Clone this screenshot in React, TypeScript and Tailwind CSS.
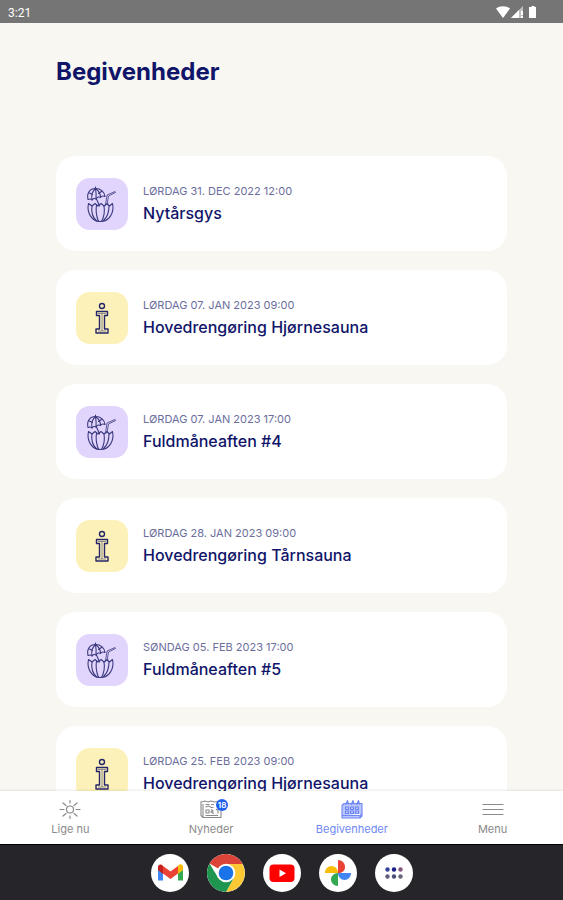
import type { ReactNode } from "react";

type Kind = "party" | "info";

const events: { kind: Kind; date: string; title: string }[] = [
  { kind: "party", date: "LØRDAG 31. DEC 2022 12:00", title: "Nytårsgys" },
  { kind: "info", date: "LØRDAG 07. JAN 2023 09:00", title: "Hovedrengøring Hjørnesauna" },
  { kind: "party", date: "LØRDAG 07. JAN 2023 17:00", title: "Fuldmåneaften #4" },
  { kind: "info", date: "LØRDAG 28. JAN 2023 09:00", title: "Hovedrengøring Tårnsauna" },
  { kind: "party", date: "SØNDAG 05. FEB 2023 17:00", title: "Fuldmåneaften #5" },
  { kind: "info", date: "LØRDAG 25. FEB 2023 09:00", title: "Hovedrengøring Hjørnesauna" },
];

function CoconutIcon() {
  return (
    <svg viewBox="0 0 52 52" className="size-13" fill="none" stroke="#3b397d" strokeWidth="1.1" strokeLinecap="round" strokeLinejoin="round" aria-hidden="true">
      <path d="M12 21.500C10.500 15 14 10.500 19.500 10.500c5.500 0 9 3.500 9.500 8-2-1-3.500-.5-4.500 1-2-1-3.500-.5-4.500 1.500-1.500-1-3-.5-4 1-1-1.200-2.500-1.300-4-.5z" />
      <path d="M19.500 10.500c-3 2.500-4.500 6.500-3.500 11.500M19.500 10.500c.5 3 1 6 .5 10.500M19.500 10.500c3 2 5 5 5 9M19.500 10.500V9M13.500 15l3 1.500M25.500 13.500l-3 2M20.500 21l3 7" />
      <path d="M29.500 27l1.500-10 8-3.500M31 27l1.500-9 7-3.500" strokeWidth="0.8" />
      <path d="M12.500 25.500l3.500 2.500 3-2.500 3 2.500 3-2.500 3 2.500 3-2.500 2.500 2.500 3-2.500c2 9-3 18-12 18s-14-9-12-18z" />
      <path d="M16 28c-1 6 1 11.500 4.500 15M20.500 27c-1 6 0 11.500 2 16.500M28 28c1 6 0 11-2.500 15.500M33 28c0 6-2 11.500-5.500 14.500" />
    </svg>
  );
}

function InfoIcon() {
  return (
    <svg viewBox="0 0 52 52" className="size-13" fill="none" stroke="#25266b" strokeWidth="1.4" strokeLinejoin="round" aria-hidden="true">
      <circle cx="26" cy="14" r="2.500" />
      <path d="M20.500 19.500h11v4h-3v13.500h3.500v4H20v-4h3.500V23.500h-3z" />
      <path d="M26 21.500v17.500M22 21.500h8M22 39h8" strokeWidth="0.5" />
    </svg>
  );
}

function SunIcon() {
  return (
    <svg viewBox="0 0 22 20" className="h-5 w-5.5" fill="none" stroke="currentColor" strokeWidth="1.2" strokeLinecap="round" aria-hidden="true">
      <circle cx="11" cy="10.500" r="3.500" />
      <path d="M11 1.500V4M11 17v2.500M1 10.500h4M17 10.500h4M4 4l3 2.500M18 4l-3 2.500M4 17l3-2.500M18 17l-3-2.500" />
    </svg>
  );
}

function NewsIcon() {
  return (
    <svg viewBox="0 0 22 20" className="h-5 w-5.5" fill="none" stroke="currentColor" strokeWidth="1.1" aria-hidden="true">
      <path d="M1 3l4-1 3 1 3-1 4 1 6-1v16.500H3L1 16.500zM3 18.500V5" />
      <path d="M5.500 5.500h4M11 5.500h3M5.500 8l3-1 3 1.500h2M6 11h3v3H6zM11 10.500l2 1.500-2 1 3 1.500M16 10l2 1.500v3M5.500 16.500H18" />
    </svg>
  );
}

function CalendarIcon() {
  return (
    <svg viewBox="0 0 22 20" className="h-5 w-5.5" fill="none" stroke="currentColor" strokeWidth="1.1" strokeLinejoin="round" aria-hidden="true">
      <path d="M3 4.500h18v12.500l-2 2H1V6.500zM1 16.500h18l2-2M19 16.500V19" fill="#b9c5fb" />
      <path d="M4.500 6l2-4.500 1 4M10 6l2-4.500 1 4M15.500 6l2-4.500 1 4" />
      <path d="M4.500 8h3v2.500h-3zM9.500 8h3v2.500h-3zM14.500 8h3v2.500h-3zM4.500 12h3v2.500h-3zM9.500 12h3v2.500h-3zM14.500 12h3v2.500h-3z" />
    </svg>
  );
}

function MenuIcon() {
  return (
    <svg viewBox="0 0 22 20" className="h-5 w-5.5" stroke="currentColor" strokeWidth="1.2" aria-hidden="true">
      <path d="M.5 5.500h21M.5 10.500h21M.5 15.500h21" />
    </svg>
  );
}

function Tab({ label, active, badge, children }: { label: string; active?: boolean; badge?: string; children: ReactNode }) {
  return (
    <button type="button" className={`flex flex-1 flex-col items-center pt-2 ${active ? "text-[#6f87f3]" : "text-[#8a8a8a]"}`}>
      <span className="relative">
        {children}
        {badge && (
          <span className="absolute top-0 left-4 flex size-3 items-center justify-center rounded-full bg-[#1f62f0] text-[8px] leading-3 font-semibold text-white">
            {badge}
          </span>
        )}
      </span>
      <span className="mt-0.5 text-[11px] leading-4">{label}</span>
    </button>
  );
}

function Launcher({ label, children }: { label: string; children: ReactNode }) {
  return (
    <button type="button" aria-label={label} className="size-[38px] overflow-hidden rounded-full bg-white">
      <svg viewBox="0 0 38 38" className="size-full" aria-hidden="true">
        {children}
      </svg>
    </button>
  );
}

export default function App() {
  return (
    <div className="flex h-screen flex-col overflow-hidden bg-[#f8f7f2] font-['Inter','Liberation_Sans',sans-serif] text-[#101569]">
      <header className="flex h-[23px] shrink-0 items-center justify-between bg-[#757575] pr-6 pl-2 text-white">
        <span className="pt-0.5 font-['Roboto',sans-serif] text-xs leading-4">3:21</span>
        <svg viewBox="0 0 44 14" className="h-3.5 w-11" fill="white" aria-hidden="true">
          <path d="M1 3.500C5 .5 11 .5 15 3.500L8 13z" />
          <path d="M28 1v12H16z" opacity=".55" />
          <path d="M24 5v8h-8zM26 6h2v4h-2zM26 11h2v2h-2z" />
          <path d="M35 2h1.500V1h3v1H41v11h-7V2z" />
        </svg>
      </header>

      <main className="min-h-0 flex-1 overflow-y-auto px-14 pt-[33px] [scrollbar-width:none]">
        <h1 className="text-2xl leading-8 font-bold">Begivenheder</h1>
        <ul className="mt-17 flex flex-col gap-[19px]">
          {events.map((event) => (
            <li key={event.date} className="flex h-[95px] shrink-0 items-center gap-[15px] rounded-[20px] bg-white px-5">
              <div className={`shrink-0 rounded-[14px] ${event.kind === "party" ? "bg-[#e2d5fd]" : "bg-[#fcf1b8]"}`}>
                {event.kind === "party" ? <CoconutIcon /> : <InfoIcon />}
              </div>
              <div>
                <p className="text-[11px] leading-4 text-[#6b6e9d]">{event.date}</p>
                <h2 className="mt-0.5 text-base leading-6 font-medium">{event.title}</h2>
              </div>
            </li>
          ))}
        </ul>
      </main>

      <nav aria-label="Hovedmenu" className="relative flex h-[53px] shrink-0 bg-white shadow-[0_0_3px_rgba(0,0,0,0.15)]">
        <Tab label="Lige nu">
          <SunIcon />
        </Tab>
        <Tab label="Nyheder" badge="18">
          <NewsIcon />
        </Tab>
        <Tab label="Begivenheder" active>
          <CalendarIcon />
        </Tab>
        <Tab label="Menu">
          <MenuIcon />
        </Tab>
      </nav>

      <footer className="relative flex h-14 shrink-0 items-center justify-center gap-[18px] border-t border-black bg-[#26262a]">
        <Launcher label="Gmail">
          <path d="M7 12v14.500h5V17z" fill="#4285f4" />
          <path d="M27 17v9.500h5V12z" fill="#34a853" />
          <path d="M27 12.500V20l5-4v-3c0-2.500-2.500-3.500-4.500-2z" fill="#fbbc04" />
          <path d="M12 19.500v-7.500l7.500 5.500L27 12v7.500L19.500 25z" fill="#ea4335" />
          <path d="M7 13v3l5 4v-8l-1-1c-2-1-4 0-4 2z" fill="#c5221f" />
        </Launcher>
        <Launcher label="Chrome">
          <path d="M19 19L2.500 9.500A19 19 0 0 1 35.500 9.500z" fill="#db4437" />
          <path d="M19 10h16.500A19 19 0 0 1 19 38l8-14.500z" fill="#fcc934" />
          <path d="M2.500 9.500A19 19 0 0 0 19 38l8-14.500-16 0z" fill="#1e9650" />
          <circle cx="19" cy="19" r="9.300" fill="white" />
          <circle cx="19" cy="19" r="7.300" fill="#1a73e8" />
        </Launcher>
        <Launcher label="YouTube">
          <rect x="6.500" y="10.500" width="25" height="17.500" rx="4" fill="#f00" />
          <path d="M16.500 15.500v7.500l6.500-3.750z" fill="white" />
        </Launcher>
        <Launcher label="Google Fotos">
          <path d="M19 6c4 0 7 3 7 7s-3 6-7 6z" fill="#ea4335" />
          <path d="M32 19c0 4-3 7-6.500 7S19 23 19 19z" fill="#4285f4" />
          <path d="M19 32c-4 0-7-3-7-6.500S15 19 19 19z" fill="#34a853" />
          <path d="M6 19c0-4 3-7 6.500-7S19 15 19 19z" fill="#fbbc04" />
        </Launcher>
        <Launcher label="Alle apps">
          <circle cx="12.500" cy="15.500" r="2.200" fill="#34449b" />
          <circle cx="19" cy="15.500" r="2.200" fill="#1b1f86" />
          <circle cx="25.500" cy="15.500" r="2.200" fill="#85567c" />
          <circle cx="12.500" cy="22.500" r="2.200" fill="#5f6078" />
          <circle cx="19" cy="22.500" r="2.200" fill="#4d4e78" />
          <circle cx="25.500" cy="22.500" r="2.200" fill="#65667c" />
        </Launcher>
      </footer>
    </div>
  );
}
